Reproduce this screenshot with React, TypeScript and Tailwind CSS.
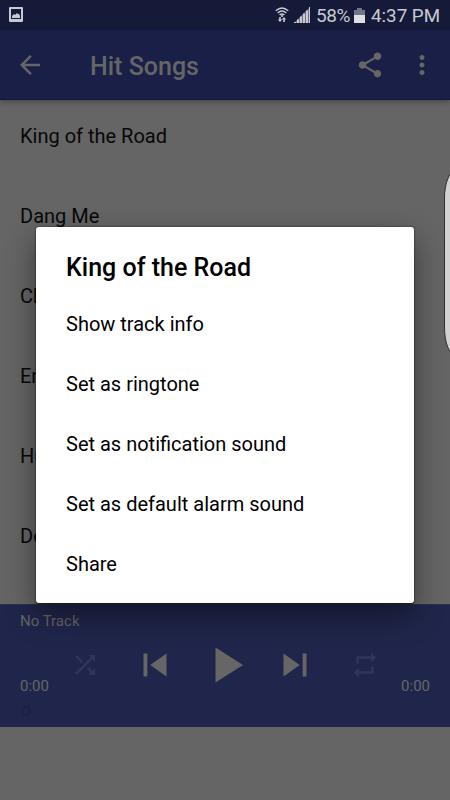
import React from 'react';

const songs = ['King of the Road', 'Dang Me', 'Chug', 'Eng', 'Hus', 'Do'];
const actions = ['Show track info', 'Set as ringtone', 'Set as notification sound', 'Set as default alarm sound', 'Share'];

function Icon({ d, className }: { d: string; className: string }) {
  return (
    <svg viewBox="0 0 24 24" fill="currentColor" className={`shrink-0 ${className}`}>
      <path d={d} />
    </svg>
  );
}

function StatusBar() {
  return (
    <div className="flex h-[30px] items-center bg-[#141a38] pl-[9px] pr-[10px] text-[#c9cad1]">
      <svg width="14" height="16" viewBox="0 0 14 16">
        <path fillRule="evenodd" fill="currentColor" d="M1 0h12a1 1 0 0 1 1 1v13a1 1 0 0 1-1 1H1a1 1 0 0 1-1-1V1a1 1 0 0 1 1-1ZM2 2v10h10V2Z" />
        <path fill="currentColor" d="M3 11V9l2-2 1 1 2-2 1 1 1 0 1 2v2Z" />
      </svg>
      <div className="ml-auto flex h-[30px] items-center">
        <svg width="14" height="16" viewBox="0 0 14 16" className="mr-[5px]" fill="none" stroke="currentColor">
          <path strokeWidth="1.4" d="M.8 3.8Q7-1.8 13.2 3.8M2.7 6Q7 2.2 11.3 6M4.6 8Q7 6 9.4 8" />
          <circle cx="7" cy="9" r="1.1" fill="currentColor" stroke="none" />
          <path fill="currentColor" stroke="none" d="M4.2 10h1.6v2.5h1.4L5 15l-2.2-2.5h1.4ZM8.2 15h1.6v-2.5h1.4L9 10l-2.2 2.5h1.4Z" />
        </svg>
        <svg width="16" height="16" viewBox="0 0 16 16" className="mr-[6px]">
          <path fill="currentColor" opacity=".5" d="M0 16 16 0v16Z" />
          <path fill="currentColor" d="M0 15h2v1H0ZM3 12.5h2V16H3ZM6 9.5h2V16H6ZM9 6.5h2V16H9ZM12 3.5h2V16h-2ZM15 0h1v16h-1Z" />
        </svg>
        <span className="w-[38px] whitespace-nowrap pt-px text-[19px] leading-[30px] tracking-[-0.4px]">58%</span>
        <svg width="11" height="15" viewBox="0 0 11 15" className="mr-[6px]">
          <path fill="#70758a" d="M3 0h5v2h3v5H0V2h3Z" />
          <path fill="#dedfe3" d="M0 7h11v8H0Z" />
        </svg>
        <span className="w-[69px] whitespace-nowrap pt-px text-[18.8px] leading-[30px]">4:37 PM</span>
      </div>
    </div>
  );
}

function AppBar() {
  return (
    <header className="relative flex h-[70px] items-center border-b border-[#111741] bg-[#191f46] pl-[15px] text-[#666] shadow-[0_2px_5px_rgba(0,0,0,0.3)]">
      <Icon className="size-[30px]" d="M20 11H7.83l5.59-5.59L12 4l-8 8 8 8 1.41-1.41L7.83 13H20v-2z" />
      <h1 className="ml-[45px] pt-[4px] text-[25px] font-medium leading-[30px]">Hit Songs</h1>
      <Icon
        className="ml-auto size-[30px]"
        d="M18 16.08c-.76 0-1.44.3-1.96.77L8.91 12.7c.05-.23.09-.46.09-.7s-.04-.47-.09-.7l7.05-4.11c.54.5 1.25.81 2.04.81 1.66 0 3-1.34 3-3s-1.34-3-3-3-3 1.34-3 3c0 .24.04.47.09.7L8.04 9.81C7.5 9.31 6.79 9 6 9c-1.66 0-3 1.34-3 3s1.34 3 3 3c.79 0 1.5-.31 2.04-.81l7.12 4.16c-.05.21-.08.43-.08.65 0 1.61 1.31 2.92 2.92 2.92 1.61 0 2.92-1.31 2.92-2.92s-1.31-2.92-2.92-2.92z"
      />
      <Icon
        className="ml-[22px] mr-[13px] size-[30px]"
        d="M12 8c1.1 0 2-.9 2-2s-.9-2-2-2-2 .9-2 2 .9 2 2 2zm0 2c-1.1 0-2 .9-2 2s.9 2 2 2 2-.9 2-2-.9-2-2-2zm0 6c-1.1 0-2 .9-2 2s.9 2 2 2 2-.9 2-2-.9-2-2-2z"
      />
    </header>
  );
}

function Player() {
  return (
    <footer className="h-[123px] border-t border-[#2b3050] bg-[#20264b] px-5 text-[15px] text-[#666]">
      <div className="pt-[6px] leading-[20px]">No Track</div>
      <div className="flex h-[70px] items-start">
        <span className="w-[30px] pt-[45px] leading-[20px]">0:00</span>
        <div className="grid h-[70px] flex-1 grid-cols-5 place-items-center pb-[2px]">
          <Icon className="size-[30px] text-[#30365a]" d="M10.59 9.17L5.41 4 4 5.41l5.17 5.17 1.42-1.41zM14.5 4l2.04 2.04L4 18.59 5.41 20 17.96 7.46 20 9.5V4h-5.5zm.33 9.41l-1.41 1.41 3.13 3.13L14.5 20H20v-5.5l-2.04 2.04-3.13-3.13z" />
          <Icon className="size-[46px]" d="M6 6h2v12H6zm3.5 6l8.5 6V6z" />
          <Icon className="ml-[5px] size-[60px]" d="M7 5v14l11-7z" />
          <Icon className="size-[46px]" d="M6 18l8.5-6L6 6v12zM16 6v12h2V6h-2z" />
          <Icon className="size-[30px] text-[#30365a]" d="M7 7h10v3l4-4-4-4v3H5v6h2V7zm10 10H7v-3l-4 4 4 4v-3h12v-6h-2v4z" />
        </div>
        <span className="flex w-[30px] justify-end pt-[45px] leading-[20px]">0:00</span>
      </div>
      <div className="ml-[1px] mt-[5px] size-[10px] rounded-full border-2 border-[#1b2144]" />
    </footer>
  );
}

export default function App() {
  return (
    <div className="relative flex h-[800px] w-[450px] flex-col overflow-hidden bg-[#656565] font-['Roboto','Liberation_Sans',sans-serif]">
      <StatusBar />
      <AppBar />
      <ul className="flex h-[504px] flex-col gap-[50px] overflow-hidden pl-5 pt-[21px] text-[20px] leading-[30px] text-[#080808]">
        {songs.map((s) => (
          <li key={s}>{s}</li>
        ))}
      </ul>
      <Player />
      <div className="absolute left-[444px] top-[170px] h-[186px] w-[30px] rounded-[12px/28px] border border-[#303030] bg-[#d2d2d2]" />
      <div className="absolute left-[36px] top-[227px] h-[376px] w-[378px] rounded-[3px] bg-white pl-[30px] pt-[26px] text-black shadow-[0_0_2px_rgba(0,0,0,0.7),0_1px_1px_rgba(0,0,0,0.6),0_12px_30px_rgba(0,0,0,0.45)]">
        <h2 className="h-[41px] text-[25px] font-medium leading-[30px]">King of the Road</h2>
        <ul className="text-[20px] leading-[60px]">
          {actions.map((a) => (
            <li key={a} className="h-[60px]">{a}</li>
          ))}
        </ul>
      </div>
    </div>
  );
}
